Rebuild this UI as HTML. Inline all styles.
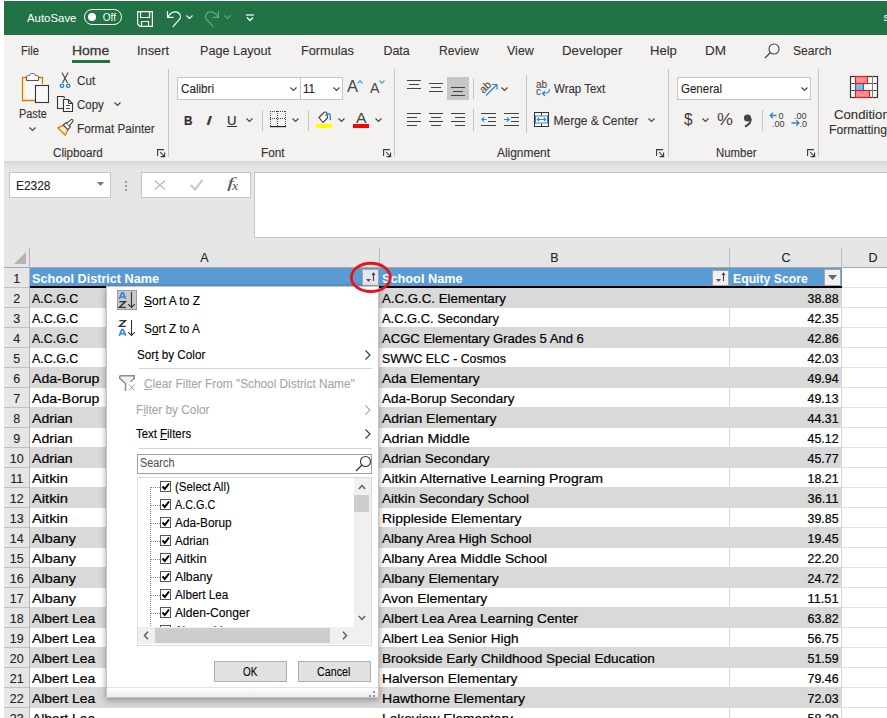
<!DOCTYPE html>
<html><head><meta charset="utf-8"><title>Excel</title>
<style>
html,body{margin:0;padding:0;}
body{width:887px;height:718px;overflow:hidden;position:relative;background:#fff;font-family:'Liberation Sans', sans-serif;}
svg{overflow:visible}
</style></head><body>
<div style="position:absolute;left:4px;top:1px;width:883px;height:34px;background:#217346;"></div>
<div style="position:absolute;left:4px;top:35px;width:883px;height:1px;background:#ffffff;"></div>
<div style="position:absolute;top:13px;font-size:11px;line-height:11px;color:#fff;white-space:nowrap;left:27.4px;transform-origin:0 0;transform:scaleX(1.036);">AutoSave</div>
<div style="position:absolute;left:84px;top:9px;width:38px;height:16px;box-sizing:border-box;border:1px solid #fff;border-radius:8px;"></div>
<div style="position:absolute;left:88px;top:13px;width:8px;height:8px;background:#fff;border-radius:50%;"></div>
<div style="position:absolute;top:13px;font-size:10px;line-height:10px;color:#fff;white-space:nowrap;left:102.8px;transform-origin:0 0;">Off</div>
<svg style="position:absolute;left:137px;top:11px;" width="17" height="16" viewBox="0 0 17 16"><path d="M0.6 0.6 H15.4 V15.4 H3 L0.6 13 Z M3.5 0.6 V6.5 H12.5 V0.6 M4.5 15.4 V10.5 H11.5 V15.4" fill="none" stroke="#fff" stroke-width="1.2"/></svg>
<svg style="position:absolute;left:166px;top:11px;" width="16" height="16" viewBox="0 0 16 16"><path d="M1.5 0 V6.4 H7.5" fill="none" stroke="#fff" stroke-width="1.2"/><path d="M2 6 C4 2.2 7 0.6 10 0.8 C13.5 1.2 15.5 4.5 13.8 8 L6.8 15.8" fill="none" stroke="#fff" stroke-width="1.2"/></svg>
<svg style="position:absolute;left:186px;top:15px;" width="7" height="4" viewBox="0 0 7 4"><path d="M0.5 0.5 L3.5 3.5 L6.5 0.5" fill="none" stroke="#fff" stroke-width="1.1"/></svg>
<svg style="position:absolute;left:204px;top:11px;" width="16" height="16" viewBox="0 0 16 16"><g opacity="0.35"><path d="M14.5 0 V6.4 H8.5" fill="none" stroke="#fff" stroke-width="1.2"/><path d="M14 6 C12 2.2 9 0.6 6 0.8 C2.5 1.2 0.5 4.5 2.2 8 L9.2 15.8" fill="none" stroke="#fff" stroke-width="1.2"/></g></svg>
<svg style="position:absolute;left:224px;top:15px;" width="7" height="4" viewBox="0 0 7 4"><path d="M0.5 0.5 L3.5 3.5 L6.5 0.5" fill="none" stroke="#fff" stroke-opacity="0.35" stroke-width="1.1"/></svg>
<svg style="position:absolute;left:246px;top:14px;" width="8" height="8" viewBox="0 0 8 8"><path d="M0 1 H8" stroke="#fff" stroke-width="1.2"/><path d="M1 3.5 L4 6.5 L7 3.5" fill="none" stroke="#fff" stroke-width="1.3"/></svg>
<div style="position:absolute;top:12px;font-size:11px;line-height:11px;color:#fff;white-space:nowrap;left:883.5px;transform-origin:0 0;">s</div>
<div style="position:absolute;left:4px;top:36px;width:883px;height:125px;background:#f3f2f1;"></div>
<div style="position:absolute;top:45px;font-size:12.5px;line-height:12.5px;color:#323130;white-space:nowrap;left:21.4px;transform-origin:0 0;-webkit-text-stroke:0.1px #323130;transform:scaleX(0.898);">File</div>
<div style="position:absolute;top:45px;font-size:12.5px;line-height:12.5px;color:#3b3a39;white-space:nowrap;left:72.2px;transform-origin:0 0;transform:scaleX(1.116);-webkit-text-stroke:0.3px #3b3a39;">Home</div>
<div style="position:absolute;top:45px;font-size:12.5px;line-height:12.5px;color:#323130;white-space:nowrap;left:137px;transform-origin:0 0;-webkit-text-stroke:0.1px #323130;transform:scaleX(1.023);">Insert</div>
<div style="position:absolute;top:45px;font-size:12.5px;line-height:12.5px;color:#323130;white-space:nowrap;left:200.1px;transform-origin:0 0;-webkit-text-stroke:0.1px #323130;transform:scaleX(1.013);">Page Layout</div>
<div style="position:absolute;top:45px;font-size:12.5px;line-height:12.5px;color:#323130;white-space:nowrap;left:301px;transform-origin:0 0;-webkit-text-stroke:0.1px #323130;transform:scaleX(1.017);">Formulas</div>
<div style="position:absolute;top:45px;font-size:12.5px;line-height:12.5px;color:#323130;white-space:nowrap;left:383.4px;transform-origin:0 0;-webkit-text-stroke:0.1px #323130;">Data</div>
<div style="position:absolute;top:45px;font-size:12.5px;line-height:12.5px;color:#323130;white-space:nowrap;left:439.2px;transform-origin:0 0;-webkit-text-stroke:0.1px #323130;transform:scaleX(0.971);">Review</div>
<div style="position:absolute;top:45px;font-size:12.5px;line-height:12.5px;color:#323130;white-space:nowrap;left:507px;transform-origin:0 0;-webkit-text-stroke:0.1px #323130;">View</div>
<div style="position:absolute;top:45px;font-size:12.5px;line-height:12.5px;color:#323130;white-space:nowrap;left:561.6px;transform-origin:0 0;-webkit-text-stroke:0.1px #323130;transform:scaleX(1.060);">Developer</div>
<div style="position:absolute;top:45px;font-size:12.5px;line-height:12.5px;color:#323130;white-space:nowrap;left:649.8px;transform-origin:0 0;-webkit-text-stroke:0.1px #323130;transform:scaleX(1.046);">Help</div>
<div style="position:absolute;top:45px;font-size:12.5px;line-height:12.5px;color:#323130;white-space:nowrap;left:704.9px;transform-origin:0 0;-webkit-text-stroke:0.1px #323130;transform:scaleX(1.080);">DM</div>
<div style="position:absolute;top:45px;font-size:12.5px;line-height:12.5px;color:#323130;white-space:nowrap;left:793px;transform-origin:0 0;-webkit-text-stroke:0.1px #323130;transform:scaleX(0.972);">Search</div>
<div style="position:absolute;left:72px;top:60px;width:38px;height:3px;background:#217346;"></div>
<svg style="position:absolute;left:764px;top:43px;" width="16" height="15" viewBox="0 0 16 15"><circle cx="10" cy="6" r="5" fill="none" stroke="#444" stroke-width="1.1"/><path d="M6.5 9.5 L1 15" stroke="#444" stroke-width="1.2"/></svg>
<div style="position:absolute;left:168px;top:69px;width:1px;height:88px;background:#c8c6c4;"></div>
<div style="position:absolute;left:394px;top:69px;width:1px;height:88px;background:#c8c6c4;"></div>
<div style="position:absolute;left:668px;top:69px;width:1px;height:88px;background:#c8c6c4;"></div>
<div style="position:absolute;left:818px;top:69px;width:1px;height:88px;background:#c8c6c4;"></div>
<svg style="position:absolute;left:157px;top:149px;" width="9" height="9" viewBox="0 0 9 9"><path d="M0.6 7 V0.6 H7" fill="none" stroke="#3b3a39" stroke-width="1.1"/><path d="M3.2 3.2 L7.6 7.6 M7.6 3.6 V7.6 H3.6" fill="none" stroke="#3b3a39" stroke-width="1.1"/></svg>
<svg style="position:absolute;left:383px;top:149px;" width="9" height="9" viewBox="0 0 9 9"><path d="M0.6 7 V0.6 H7" fill="none" stroke="#3b3a39" stroke-width="1.1"/><path d="M3.2 3.2 L7.6 7.6 M7.6 3.6 V7.6 H3.6" fill="none" stroke="#3b3a39" stroke-width="1.1"/></svg>
<svg style="position:absolute;left:656px;top:149px;" width="9" height="9" viewBox="0 0 9 9"><path d="M0.6 7 V0.6 H7" fill="none" stroke="#3b3a39" stroke-width="1.1"/><path d="M3.2 3.2 L7.6 7.6 M7.6 3.6 V7.6 H3.6" fill="none" stroke="#3b3a39" stroke-width="1.1"/></svg>
<svg style="position:absolute;left:807px;top:149px;" width="9" height="9" viewBox="0 0 9 9"><path d="M0.6 7 V0.6 H7" fill="none" stroke="#3b3a39" stroke-width="1.1"/><path d="M3.2 3.2 L7.6 7.6 M7.6 3.6 V7.6 H3.6" fill="none" stroke="#3b3a39" stroke-width="1.1"/></svg>
<div style="position:absolute;top:147px;font-size:12px;line-height:12px;color:#323130;white-space:nowrap;left:52.7px;transform-origin:0 0;-webkit-text-stroke:0.1px #323130;transform:scaleX(0.969);">Clipboard</div>
<div style="position:absolute;top:147px;font-size:12px;line-height:12px;color:#323130;white-space:nowrap;left:261.2px;transform-origin:0 0;-webkit-text-stroke:0.1px #323130;transform:scaleX(0.983);">Font</div>
<div style="position:absolute;top:147px;font-size:12px;line-height:12px;color:#323130;white-space:nowrap;left:497.2px;transform-origin:0 0;-webkit-text-stroke:0.1px #323130;transform:scaleX(0.993);">Alignment</div>
<div style="position:absolute;top:147px;font-size:12px;line-height:12px;color:#323130;white-space:nowrap;left:715.5px;transform-origin:0 0;-webkit-text-stroke:0.1px #323130;transform:scaleX(0.949);">Number</div>
<svg style="position:absolute;left:21px;top:72px;" width="29" height="32" viewBox="0 0 29 32"><path d="M5 5.5 H1.5 V28.5 H14" fill="none" stroke="#e07b00" stroke-width="1.3"/><path d="M18 5.5 H21.5 V12" fill="none" stroke="#e07b00" stroke-width="1.3"/>
<path d="M3 7 V27 H14 M3 7 H5 M18 7 H20 V12" fill="none" stroke="#fbe3a6" stroke-width="1.2"/>
<rect x="3.6" y="7.6" width="16" height="19" fill="#f9f9f9"/>
<path d="M5.5 8.5 V5 C5.5 3.5 7 3.5 8.5 3.5 C9 0.8 14 0.8 14.5 3.5 C16 3.5 17.5 3.5 17.5 5 V8.5 Z" fill="#fafafa" stroke="#555" stroke-width="1"/>
<rect x="14.5" y="13.5" width="13" height="17" fill="#f9f9f9" stroke="#333" stroke-width="1.1"/></svg>
<div style="position:absolute;top:108px;font-size:12px;line-height:12px;color:#323130;white-space:nowrap;left:19.2px;transform-origin:0 0;-webkit-text-stroke:0.1px #323130;transform:scaleX(0.906);">Paste</div>
<svg style="position:absolute;left:29px;top:127px;" width="7" height="4" viewBox="0 0 7 4"><path d="M0.5 0.5 L3.5 3.5 L6.5 0.5" fill="none" stroke="#444" stroke-width="1.1"/></svg>
<svg style="position:absolute;left:59px;top:72px;" width="12" height="16" viewBox="0 0 12 16"><path d="M3 0.5 L8.5 11 M9 0.5 L3.5 11" stroke="#444" stroke-width="1.1" fill="none"/><circle cx="3" cy="13.8" r="1.7" fill="none" stroke="#2b88d8" stroke-width="1.4"/><circle cx="9.2" cy="13.8" r="1.7" fill="none" stroke="#2b88d8" stroke-width="1.4"/></svg>
<div style="position:absolute;top:75px;font-size:12px;line-height:12px;color:#323130;white-space:nowrap;left:76.7px;transform-origin:0 0;-webkit-text-stroke:0.1px #323130;transform:scaleX(0.974);">Cut</div>
<svg style="position:absolute;left:56px;top:96px;" width="18" height="17" viewBox="0 0 18 17"><path d="M7 12.5 H1.5 V0.5 H7.5 L9 2" fill="none" stroke="#333" stroke-width="1.1"/><path d="M7.5 3.5 H12.5 L16.5 7.5 V15.5 H7.5 Z" fill="#fafafa" stroke="#333" stroke-width="1.1"/><path d="M12.5 3.5 V7.5 H16.5" fill="none" stroke="#333" stroke-width="1"/><path d="M10 9.5 H14 M10 12.5 H14" stroke="#444" stroke-width="1"/></svg>
<div style="position:absolute;top:99px;font-size:12px;line-height:12px;color:#323130;white-space:nowrap;left:76.7px;transform-origin:0 0;-webkit-text-stroke:0.1px #323130;transform:scaleX(0.957);">Copy</div>
<svg style="position:absolute;left:114px;top:102px;" width="7" height="4" viewBox="0 0 7 4"><path d="M0.5 0.5 L3.5 3.5 L6.5 0.5" fill="none" stroke="#444" stroke-width="1.1"/></svg>
<svg style="position:absolute;left:57px;top:119px;" width="17" height="17" viewBox="0 0 17 17"><path d="M0.8 8.8 L6.5 6.3 L10.8 10.6 L8.3 16.2 Z" fill="#fdf3e0" stroke="#e07b00" stroke-width="1.3" stroke-linejoin="round"/><path d="M4 11 L8 13.5 L8.3 15.5 Z" fill="#f7c66b"/><path d="M6.3 6 L9.2 3.6 L13.4 7.8 L10.9 10.7 Z" fill="#fff" stroke="#444" stroke-width="1.1"/><path d="M10 4.2 L14.2 0.6 C15 0 16.6 1.4 15.9 2.3 L12.4 6.6" fill="#fff" stroke="#444" stroke-width="1.1"/></svg>
<div style="position:absolute;top:123px;font-size:12px;line-height:12px;color:#323130;white-space:nowrap;left:76.7px;transform-origin:0 0;-webkit-text-stroke:0.1px #323130;transform:scaleX(0.978);">Format Painter</div>
<div style="position:absolute;left:177px;top:77px;width:124px;height:23px;box-sizing:border-box;background:#fff;border:1px solid #c8c6c4;"></div>
<div style="position:absolute;left:300px;top:77px;width:43px;height:23px;box-sizing:border-box;background:#fff;border:1px solid #c8c6c4;"></div>
<div style="position:absolute;top:83px;font-size:12px;line-height:12px;color:#252423;white-space:nowrap;left:180.5px;transform-origin:0 0;-webkit-text-stroke:0.1px #252423;transform:scaleX(0.970);">Calibri</div>
<div style="position:absolute;top:83px;font-size:12px;line-height:12px;color:#252423;white-space:nowrap;left:303.3px;transform-origin:0 0;-webkit-text-stroke:0.1px #252423;transform:scaleX(0.962);">11</div>
<svg style="position:absolute;left:290px;top:87px;" width="7" height="4" viewBox="0 0 7 4"><path d="M0.5 0.5 L3.5 3.5 L6.5 0.5" fill="none" stroke="#444" stroke-width="1.1"/></svg>
<svg style="position:absolute;left:333px;top:87px;" width="7" height="4" viewBox="0 0 7 4"><path d="M0.5 0.5 L3.5 3.5 L6.5 0.5" fill="none" stroke="#444" stroke-width="1.1"/></svg>
<div style="position:absolute;top:79.3px;font-size:16px;line-height:16px;color:#444;white-space:nowrap;left:347.3px;transform-origin:0 0;transform:scaleX(1.031);-webkit-text-stroke:0;">A</div>
<svg style="position:absolute;left:357px;top:80px;" width="6" height="4" viewBox="0 0 6 4"><path d="M0.5 3.5 L3 0.8 L5.5 3.5" fill="none" stroke="#2b88d8" stroke-width="1.1"/></svg>
<div style="position:absolute;top:81.3px;font-size:14px;line-height:14px;color:#444;white-space:nowrap;left:370.4px;transform-origin:0 0;transform:scaleX(1.017);-webkit-text-stroke:0;">A</div>
<svg style="position:absolute;left:379px;top:80px;" width="6" height="4" viewBox="0 0 6 4"><path d="M0.5 0.5 L3 3.2 L5.5 0.5" fill="none" stroke="#2b88d8" stroke-width="1.1"/></svg>
<div style="position:absolute;top:113.5px;font-size:13px;line-height:13px;color:#323130;white-space:nowrap;font-weight:bold;left:184px;transform-origin:0 0;-webkit-text-stroke:0.2px #323130;transform:scaleX(0.905);">B</div>
<div style="position:absolute;top:113.5px;font-size:13px;line-height:13px;color:#323130;white-space:nowrap;left:206px;transform-origin:0 0;-webkit-text-stroke:0.2px #323130;transform:scaleX(1.655);font-style:italic;">I</div>
<div style="position:absolute;top:113.5px;font-size:13px;line-height:13px;color:#323130;white-space:nowrap;left:227px;transform-origin:0 0;-webkit-text-stroke:0.2px #323130;transform:scaleX(1.012);">U</div>
<div style="position:absolute;left:227px;top:126px;width:10px;height:1px;background:#323130;"></div>
<svg style="position:absolute;left:246px;top:118px;" width="7" height="4" viewBox="0 0 7 4"><path d="M0.5 0.5 L3.5 3.5 L6.5 0.5" fill="none" stroke="#444" stroke-width="1.1"/></svg>
<div style="position:absolute;left:262px;top:110px;width:1px;height:21px;background:#c8c6c4;"></div>
<svg style="position:absolute;left:270px;top:111px;" width="16" height="17" viewBox="0 0 16 17"><rect x="0" y="0" width="1" height="1" fill="#444"/><rect x="0" y="0" width="1" height="1" fill="#444"/><rect x="15" y="0" width="1" height="1" fill="#444"/><rect x="0" y="7" width="1" height="1" fill="#444"/><rect x="7" y="0" width="1" height="1" fill="#444"/><rect x="2" y="0" width="1" height="1" fill="#444"/><rect x="0" y="2" width="1" height="1" fill="#444"/><rect x="15" y="2" width="1" height="1" fill="#444"/><rect x="2" y="7" width="1" height="1" fill="#444"/><rect x="7" y="2" width="1" height="1" fill="#444"/><rect x="4" y="0" width="1" height="1" fill="#444"/><rect x="0" y="4" width="1" height="1" fill="#444"/><rect x="15" y="4" width="1" height="1" fill="#444"/><rect x="4" y="7" width="1" height="1" fill="#444"/><rect x="7" y="4" width="1" height="1" fill="#444"/><rect x="6" y="0" width="1" height="1" fill="#444"/><rect x="0" y="6" width="1" height="1" fill="#444"/><rect x="15" y="6" width="1" height="1" fill="#444"/><rect x="6" y="7" width="1" height="1" fill="#444"/><rect x="7" y="6" width="1" height="1" fill="#444"/><rect x="8" y="0" width="1" height="1" fill="#444"/><rect x="0" y="8" width="1" height="1" fill="#444"/><rect x="15" y="8" width="1" height="1" fill="#444"/><rect x="8" y="7" width="1" height="1" fill="#444"/><rect x="7" y="8" width="1" height="1" fill="#444"/><rect x="10" y="0" width="1" height="1" fill="#444"/><rect x="0" y="10" width="1" height="1" fill="#444"/><rect x="15" y="10" width="1" height="1" fill="#444"/><rect x="10" y="7" width="1" height="1" fill="#444"/><rect x="7" y="10" width="1" height="1" fill="#444"/><rect x="12" y="0" width="1" height="1" fill="#444"/><rect x="0" y="12" width="1" height="1" fill="#444"/><rect x="15" y="12" width="1" height="1" fill="#444"/><rect x="12" y="7" width="1" height="1" fill="#444"/><rect x="7" y="12" width="1" height="1" fill="#444"/><rect x="14" y="0" width="1" height="1" fill="#444"/><rect x="0" y="14" width="1" height="1" fill="#444"/><rect x="15" y="14" width="1" height="1" fill="#444"/><rect x="14" y="7" width="1" height="1" fill="#444"/><rect x="7" y="14" width="1" height="1" fill="#444"/><rect x="0" y="15" width="16" height="1.2" fill="#222"/></svg>
<svg style="position:absolute;left:292px;top:118px;" width="7" height="4" viewBox="0 0 7 4"><path d="M0.5 0.5 L3.5 3.5 L6.5 0.5" fill="none" stroke="#444" stroke-width="1.1"/></svg>
<div style="position:absolute;left:308px;top:110px;width:1px;height:21px;background:#c8c6c4;"></div>
<svg style="position:absolute;left:316px;top:111px;" width="17" height="13" viewBox="0 0 17 13"><path d="M3 6.5 L8 1.5 C9 0.5 10.5 1 11 2.5 L11.5 7 L7 11.5 Z" fill="#fff" stroke="#444" stroke-width="1.1"/><path d="M9.5 5 C11 1.5 14 2 14.3 5.5 L14.3 9" fill="none" stroke="#2b88d8" stroke-width="1.4"/></svg>
<div style="position:absolute;left:316px;top:124px;width:16px;height:4px;background:#ffff00;"></div>
<svg style="position:absolute;left:338px;top:118px;" width="7" height="4" viewBox="0 0 7 4"><path d="M0.5 0.5 L3.5 3.5 L6.5 0.5" fill="none" stroke="#444" stroke-width="1.1"/></svg>
<div style="position:absolute;top:110.5px;font-size:14px;line-height:14px;color:#444;white-space:nowrap;left:355.5px;transform-origin:0 0;transform:scaleX(1.124);-webkit-text-stroke:0;">A</div>
<div style="position:absolute;left:353px;top:124px;width:16px;height:4px;background:#ff0000;"></div>
<svg style="position:absolute;left:375px;top:118px;" width="7" height="4" viewBox="0 0 7 4"><path d="M0.5 0.5 L3.5 3.5 L6.5 0.5" fill="none" stroke="#444" stroke-width="1.1"/></svg>
<svg style="position:absolute;left:407px;top:80px;" width="14" height="16" viewBox="0 0 14 16"><path d="M0 0.5 H14" stroke="#444" stroke-width="1"/><path d="M2 4.5 H12" stroke="#444" stroke-width="1"/><path d="M0 8.5 H14" stroke="#444" stroke-width="1"/></svg>
<svg style="position:absolute;left:429px;top:83px;" width="14" height="16" viewBox="0 0 14 16"><path d="M0 0.5 H14" stroke="#444" stroke-width="1"/><path d="M2 4.5 H12" stroke="#444" stroke-width="1"/><path d="M0 8.5 H14" stroke="#444" stroke-width="1"/></svg>
<div style="position:absolute;left:447px;top:77px;width:22px;height:23px;background:#c8c6c4;"></div>
<svg style="position:absolute;left:451px;top:84px;" width="14" height="16" viewBox="0 0 14 16"><path d="M0 3.5 H14" stroke="#444" stroke-width="1"/><path d="M2 7.5 H12" stroke="#444" stroke-width="1"/><path d="M0 11.5 H14" stroke="#444" stroke-width="1"/></svg>
<div style="position:absolute;left:473px;top:78px;width:1px;height:21px;background:#c8c6c4;"></div>
<svg style="position:absolute;left:480px;top:79px;" width="28" height="18" viewBox="0 0 28 18"><text x="0" y="0" font-size="11" fill="#3b3a39" transform="translate(3.5 15) rotate(-45)" font-family="Liberation Sans">ab</text><path d="M6 16.5 L16.5 6 M12 5.5 H17 V10.5" fill="none" stroke="#2b88d8" stroke-width="1.2"/></svg>
<svg style="position:absolute;left:501px;top:87px;" width="7" height="4" viewBox="0 0 7 4"><path d="M0.5 0.5 L3.5 3.5 L6.5 0.5" fill="none" stroke="#444" stroke-width="1.1"/></svg>
<div style="position:absolute;left:526px;top:75px;width:1px;height:58px;background:#c8c6c4;"></div>
<svg style="position:absolute;left:536px;top:80px;" width="16" height="17" viewBox="0 0 16 17"><text x="0" y="8" font-size="10" fill="#3b3a39" font-family="Liberation Sans">ab</text><text x="0" y="14.5" font-size="10" fill="#3b3a39" font-family="Liberation Sans">c</text><path d="M13.5 9 C14 12 12 13 7 13.5 M9 11 L6.5 13.5 L9 16" fill="none" stroke="#2b88d8" stroke-width="1.2"/></svg>
<div style="position:absolute;top:83px;font-size:12px;line-height:12px;color:#323130;white-space:nowrap;left:553.5px;transform-origin:0 0;-webkit-text-stroke:0.1px #323130;transform:scaleX(0.957);">Wrap Text</div>
<svg style="position:absolute;left:407px;top:113px;" width="14" height="16" viewBox="0 0 14 16"><path d="M0 0.5 H14" stroke="#444" stroke-width="1"/><path d="M0 4.5 H10" stroke="#444" stroke-width="1"/><path d="M0 8.5 H14" stroke="#444" stroke-width="1"/><path d="M0 12.5 H10" stroke="#444" stroke-width="1"/></svg>
<svg style="position:absolute;left:429px;top:113px;" width="14" height="16" viewBox="0 0 14 16"><path d="M0 0.5 H14" stroke="#444" stroke-width="1"/><path d="M2 4.5 H12" stroke="#444" stroke-width="1"/><path d="M0 8.5 H14" stroke="#444" stroke-width="1"/><path d="M2 12.5 H12" stroke="#444" stroke-width="1"/></svg>
<svg style="position:absolute;left:451px;top:113px;" width="14" height="16" viewBox="0 0 14 16"><path d="M0 0.5 H14" stroke="#444" stroke-width="1"/><path d="M4 4.5 H14" stroke="#444" stroke-width="1"/><path d="M0 8.5 H14" stroke="#444" stroke-width="1"/><path d="M4 12.5 H14" stroke="#444" stroke-width="1"/></svg>
<div style="position:absolute;left:473px;top:109px;width:1px;height:22px;background:#c8c6c4;"></div>
<svg style="position:absolute;left:481px;top:113px;" width="16" height="15" viewBox="0 0 16 15"><path d="M0 0.5 H15 M7 4.5 H15 M7 8.5 H15 M0 12.5 H15" stroke="#444"/><path d="M5.5 6.5 H0.8 M3 4.3 L0.8 6.5 L3 8.7" fill="none" stroke="#2b88d8" stroke-width="1.1"/></svg>
<svg style="position:absolute;left:504px;top:113px;" width="16" height="15" viewBox="0 0 16 15"><path d="M0 0.5 H15 M7 4.5 H15 M7 8.5 H15 M0 12.5 H15" stroke="#444"/><path d="M0 6.5 H5 M3 4.3 L5.2 6.5 L3 8.7" fill="none" stroke="#2b88d8" stroke-width="1.1"/></svg>
<svg style="position:absolute;left:534px;top:112px;" width="15" height="15" viewBox="0 0 15 15"><rect x="0.5" y="0.5" width="14" height="14" fill="#fafafa" stroke="#333" stroke-width="1"/><rect x="1.5" y="4" width="12" height="7" fill="#fff" stroke="#2b88d8" stroke-width="1"/><path d="M7.5 0.5 V3.5 M7.5 11.5 V14.5" stroke="#333" stroke-width="1"/><path d="M3.3 7.5 H11.7 M5.2 5.6 L3.3 7.5 L5.2 9.4 M9.8 5.6 L11.7 7.5 L9.8 9.4" fill="none" stroke="#2b88d8" stroke-width="1.1"/></svg>
<div style="position:absolute;top:115px;font-size:12px;line-height:12px;color:#323130;white-space:nowrap;left:553.5px;transform-origin:0 0;-webkit-text-stroke:0.1px #323130;">Merge &amp; Center</div>
<svg style="position:absolute;left:648px;top:118px;" width="7" height="4" viewBox="0 0 7 4"><path d="M0.5 0.5 L3.5 3.5 L6.5 0.5" fill="none" stroke="#444" stroke-width="1.1"/></svg>
<div style="position:absolute;left:677px;top:77px;width:134px;height:23px;box-sizing:border-box;background:#fff;border:1px solid #c8c6c4;"></div>
<div style="position:absolute;top:83px;font-size:12px;line-height:12px;color:#252423;white-space:nowrap;left:680.5px;transform-origin:0 0;-webkit-text-stroke:0.1px #252423;transform:scaleX(0.960);">General</div>
<svg style="position:absolute;left:801px;top:87px;" width="7" height="4" viewBox="0 0 7 4"><path d="M0.5 0.5 L3.5 3.5 L6.5 0.5" fill="none" stroke="#444" stroke-width="1.1"/></svg>
<div style="position:absolute;top:112px;font-size:16px;line-height:16px;color:#3b3a39;white-space:nowrap;left:683.5px;transform-origin:0 0;transform:scaleX(0.954);-webkit-text-stroke:0;font-weight:300;">$</div>
<svg style="position:absolute;left:702px;top:118px;" width="7" height="4" viewBox="0 0 7 4"><path d="M0.5 0.5 L3.5 3.5 L6.5 0.5" fill="none" stroke="#444" stroke-width="1.1"/></svg>
<div style="position:absolute;top:112px;font-size:16px;line-height:16px;color:#444;white-space:nowrap;left:716.5px;transform-origin:0 0;transform:scaleX(1.124);-webkit-text-stroke:0;">%</div>
<svg style="position:absolute;left:743px;top:114px;" width="9" height="13" viewBox="0 0 9 13"><circle cx="4.5" cy="4" r="3.6" fill="#444"/><path d="M7.8 4.5 C8 8.5 5.5 11 2 12.5" fill="none" stroke="#444" stroke-width="2"/></svg>
<div style="position:absolute;left:762px;top:110px;width:1px;height:21px;background:#c8c6c4;"></div>
<svg style="position:absolute;left:769px;top:111px;" width="18" height="17" viewBox="0 0 18 17"><path d="M1 4.5 H7.5 M4 1.8 L1.2 4.5 L4 7.2" fill="none" stroke="#2b88d8" stroke-width="1.3"/><text x="9.5" y="7.5" font-size="9" fill="#3b3a39" font-family="Liberation Sans">0</text><text x="3" y="15.5" font-size="9" fill="#3b3a39" font-family="Liberation Sans">.00</text></svg>
<svg style="position:absolute;left:791px;top:111px;" width="18" height="17" viewBox="0 0 18 17"><text x="3" y="7.5" font-size="9" fill="#3b3a39" font-family="Liberation Sans">.00</text><path d="M0.5 12 H8 M5.3 9.3 L8 12 L5.3 14.7" fill="none" stroke="#2b88d8" stroke-width="1.3"/><text x="8.5" y="15.5" font-size="9" fill="#3b3a39" font-family="Liberation Sans">.0</text></svg>
<svg style="position:absolute;left:850px;top:76px;" width="28" height="22" viewBox="0 0 28 22"><rect x="0.5" y="0.5" width="27" height="21" fill="#fafafa" stroke="#333" stroke-width="1.2"/><path d="M0 7.5 H28 M0 14.5 H28" stroke="#555" stroke-width="1"/><path d="M22.5 0 V22" stroke="#808080" stroke-width="1"/><rect x="5.5" y="7.5" width="8" height="7" fill="#7dbbee"/><path d="M5.5 7.5 V14.5 M13.5 7.5 V14.5" stroke="#1f6fc5" stroke-width="1.2"/><rect x="5.5" y="0.6" width="12" height="6.9" fill="#ff8f96" stroke="#e0201e" stroke-width="1.2"/><rect x="5.5" y="14.5" width="14" height="6.9" fill="#ff8f96" stroke="#e0201e" stroke-width="1.2"/></svg>
<div style="position:absolute;top:108.5px;font-size:12px;line-height:12px;color:#323130;white-space:nowrap;left:833.5px;transform-origin:0 0;-webkit-text-stroke:0.1px #323130;transform:scaleX(1.099);">Conditional</div>
<div style="position:absolute;top:124px;font-size:12px;line-height:12px;color:#323130;white-space:nowrap;left:829.4px;transform-origin:0 0;-webkit-text-stroke:0.1px #323130;transform:scaleX(1.011);">Formatting</div>
<div style="position:absolute;left:4px;top:161px;width:883px;height:87px;background:#e6e6e6;"></div>
<div style="position:absolute;left:4px;top:161px;width:883px;height:6px;background:linear-gradient(#d6d6d6,#e6e6e6);"></div>
<div style="position:absolute;left:9px;top:172px;width:102px;height:26px;box-sizing:border-box;background:#fff;border:1px solid #c6c6c6;"></div>
<div style="position:absolute;top:180px;font-size:12px;line-height:12px;color:#222;white-space:nowrap;left:16px;transform-origin:0 0;-webkit-text-stroke:0.1px #222;transform:scaleX(0.994);">E2328</div>
<svg style="position:absolute;left:97px;top:182px;" width="7" height="4" viewBox="0 0 7 4"><path d="M0 0 H7 L3.5 4 Z" fill="#777"/></svg>
<div style="position:absolute;left:125px;top:181px;width:2px;height:2px;background:#a0a0a0;"></div>
<div style="position:absolute;left:125px;top:185px;width:2px;height:2px;background:#a0a0a0;"></div>
<div style="position:absolute;left:125px;top:189px;width:2px;height:2px;background:#a0a0a0;"></div>
<div style="position:absolute;left:141px;top:172px;width:110px;height:26px;box-sizing:border-box;background:#fff;border:1px solid #c6c6c6;"></div>
<svg style="position:absolute;left:154px;top:180px;" width="12" height="10" viewBox="0 0 12 10"><path d="M0.8 0.6 L11 9.6 M11 0.6 L0.8 9.6" stroke="#c4c4c4" stroke-width="1.5"/></svg>
<svg style="position:absolute;left:190px;top:179px;" width="13" height="12" viewBox="0 0 13 12"><path d="M0.8 6 L5 10.5 L12.5 1" fill="none" stroke="#cacaca" stroke-width="2.2"/></svg>
<div style="position:absolute;top:177px;font-size:14px;line-height:14px;color:#555;white-space:nowrap;left:226.5px;transform-origin:0 0;transform:scaleX(1.799);font-family:Liberation Serif;font-style:italic;-webkit-text-stroke:0;">f</div>
<div style="position:absolute;top:179.5px;font-size:12px;line-height:12px;color:#555;white-space:nowrap;left:231.5px;transform-origin:0 0;transform:scaleX(1.167);font-family:Liberation Serif;font-style:italic;-webkit-text-stroke:0;">x</div>
<div style="position:absolute;left:254px;top:172px;width:640px;height:66px;box-sizing:border-box;background:#fff;border:1px solid #c6c6c6;"></div>
<div style="position:absolute;left:4px;top:248px;width:883px;height:470px;background:#fff;"></div>
<div style="position:absolute;left:4px;top:248px;width:883px;height:19px;background:#e6e6e6;"></div>
<div style="position:absolute;left:4px;top:267px;width:25px;height:451px;background:#e6e6e6;"></div>
<div style="position:absolute;left:4px;top:267px;width:883px;height:1px;background:#a8a8a8;"></div>
<div style="position:absolute;left:29px;top:248px;width:1px;height:19px;background:#bdbdbd;"></div>
<div style="position:absolute;left:379px;top:248px;width:1px;height:19px;background:#bdbdbd;"></div>
<div style="position:absolute;left:729px;top:248px;width:1px;height:19px;background:#bdbdbd;"></div>
<div style="position:absolute;left:841px;top:248px;width:1px;height:19px;background:#bdbdbd;"></div>
<div style="position:absolute;left:29px;top:248px;width:1px;height:470px;background:#b4b4b4;"></div>
<svg style="position:absolute;left:14px;top:252px;" width="12" height="12" viewBox="0 0 12 12"><path d="M12 0 V12 H0 Z" fill="#b4b4b4"/></svg>
<div style="position:absolute;top:252px;font-size:12.5px;line-height:12.5px;color:#222;white-space:nowrap;left:200.33px;transform-origin:0 0;-webkit-text-stroke:0.1px #222;">A</div>
<div style="position:absolute;top:252px;font-size:12.5px;line-height:12.5px;color:#222;white-space:nowrap;left:550.33px;transform-origin:0 0;-webkit-text-stroke:0.1px #222;">B</div>
<div style="position:absolute;top:252px;font-size:12.5px;line-height:12.5px;color:#222;white-space:nowrap;left:781.48px;transform-origin:0 0;-webkit-text-stroke:0.1px #222;">C</div>
<div style="position:absolute;top:252px;font-size:12.5px;line-height:12.5px;color:#222;white-space:nowrap;left:868.48px;transform-origin:0 0;-webkit-text-stroke:0.1px #222;">D</div>
<div style="position:absolute;left:4px;top:287px;width:25px;height:1px;background:#c0c0c0;"></div>
<div style="position:absolute;top:273px;font-size:12.5px;line-height:12.5px;color:#222;white-space:nowrap;left:13.22px;transform-origin:0 0;-webkit-text-stroke:0.1px #222;">1</div>
<div style="position:absolute;left:4px;top:307px;width:25px;height:1px;background:#c0c0c0;"></div>
<div style="position:absolute;top:293px;font-size:12.5px;line-height:12.5px;color:#222;white-space:nowrap;left:13.22px;transform-origin:0 0;-webkit-text-stroke:0.1px #222;">2</div>
<div style="position:absolute;left:4px;top:327px;width:25px;height:1px;background:#c0c0c0;"></div>
<div style="position:absolute;top:313px;font-size:12.5px;line-height:12.5px;color:#222;white-space:nowrap;left:13.22px;transform-origin:0 0;-webkit-text-stroke:0.1px #222;">3</div>
<div style="position:absolute;left:4px;top:347px;width:25px;height:1px;background:#c0c0c0;"></div>
<div style="position:absolute;top:333px;font-size:12.5px;line-height:12.5px;color:#222;white-space:nowrap;left:13.22px;transform-origin:0 0;-webkit-text-stroke:0.1px #222;">4</div>
<div style="position:absolute;left:4px;top:367px;width:25px;height:1px;background:#c0c0c0;"></div>
<div style="position:absolute;top:353px;font-size:12.5px;line-height:12.5px;color:#222;white-space:nowrap;left:13.22px;transform-origin:0 0;-webkit-text-stroke:0.1px #222;">5</div>
<div style="position:absolute;left:4px;top:387px;width:25px;height:1px;background:#c0c0c0;"></div>
<div style="position:absolute;top:373px;font-size:12.5px;line-height:12.5px;color:#222;white-space:nowrap;left:13.22px;transform-origin:0 0;-webkit-text-stroke:0.1px #222;">6</div>
<div style="position:absolute;left:4px;top:407px;width:25px;height:1px;background:#c0c0c0;"></div>
<div style="position:absolute;top:393px;font-size:12.5px;line-height:12.5px;color:#222;white-space:nowrap;left:13.22px;transform-origin:0 0;-webkit-text-stroke:0.1px #222;">7</div>
<div style="position:absolute;left:4px;top:427px;width:25px;height:1px;background:#c0c0c0;"></div>
<div style="position:absolute;top:413px;font-size:12.5px;line-height:12.5px;color:#222;white-space:nowrap;left:13.22px;transform-origin:0 0;-webkit-text-stroke:0.1px #222;">8</div>
<div style="position:absolute;left:4px;top:447px;width:25px;height:1px;background:#c0c0c0;"></div>
<div style="position:absolute;top:433px;font-size:12.5px;line-height:12.5px;color:#222;white-space:nowrap;left:13.22px;transform-origin:0 0;-webkit-text-stroke:0.1px #222;">9</div>
<div style="position:absolute;left:4px;top:467px;width:25px;height:1px;background:#c0c0c0;"></div>
<div style="position:absolute;top:453px;font-size:12.5px;line-height:12.5px;color:#222;white-space:nowrap;left:9.75px;transform-origin:0 0;-webkit-text-stroke:0.1px #222;">10</div>
<div style="position:absolute;left:4px;top:487px;width:25px;height:1px;background:#c0c0c0;"></div>
<div style="position:absolute;top:473px;font-size:12.5px;line-height:12.5px;color:#222;white-space:nowrap;left:10.21px;transform-origin:0 0;-webkit-text-stroke:0.1px #222;">11</div>
<div style="position:absolute;left:4px;top:507px;width:25px;height:1px;background:#c0c0c0;"></div>
<div style="position:absolute;top:493px;font-size:12.5px;line-height:12.5px;color:#222;white-space:nowrap;left:9.75px;transform-origin:0 0;-webkit-text-stroke:0.1px #222;">12</div>
<div style="position:absolute;left:4px;top:527px;width:25px;height:1px;background:#c0c0c0;"></div>
<div style="position:absolute;top:513px;font-size:12.5px;line-height:12.5px;color:#222;white-space:nowrap;left:9.75px;transform-origin:0 0;-webkit-text-stroke:0.1px #222;">13</div>
<div style="position:absolute;left:4px;top:547px;width:25px;height:1px;background:#c0c0c0;"></div>
<div style="position:absolute;top:533px;font-size:12.5px;line-height:12.5px;color:#222;white-space:nowrap;left:9.75px;transform-origin:0 0;-webkit-text-stroke:0.1px #222;">14</div>
<div style="position:absolute;left:4px;top:567px;width:25px;height:1px;background:#c0c0c0;"></div>
<div style="position:absolute;top:553px;font-size:12.5px;line-height:12.5px;color:#222;white-space:nowrap;left:9.75px;transform-origin:0 0;-webkit-text-stroke:0.1px #222;">15</div>
<div style="position:absolute;left:4px;top:587px;width:25px;height:1px;background:#c0c0c0;"></div>
<div style="position:absolute;top:573px;font-size:12.5px;line-height:12.5px;color:#222;white-space:nowrap;left:9.75px;transform-origin:0 0;-webkit-text-stroke:0.1px #222;">16</div>
<div style="position:absolute;left:4px;top:607px;width:25px;height:1px;background:#c0c0c0;"></div>
<div style="position:absolute;top:593px;font-size:12.5px;line-height:12.5px;color:#222;white-space:nowrap;left:9.75px;transform-origin:0 0;-webkit-text-stroke:0.1px #222;">17</div>
<div style="position:absolute;left:4px;top:627px;width:25px;height:1px;background:#c0c0c0;"></div>
<div style="position:absolute;top:613px;font-size:12.5px;line-height:12.5px;color:#222;white-space:nowrap;left:9.75px;transform-origin:0 0;-webkit-text-stroke:0.1px #222;">18</div>
<div style="position:absolute;left:4px;top:647px;width:25px;height:1px;background:#c0c0c0;"></div>
<div style="position:absolute;top:633px;font-size:12.5px;line-height:12.5px;color:#222;white-space:nowrap;left:9.75px;transform-origin:0 0;-webkit-text-stroke:0.1px #222;">19</div>
<div style="position:absolute;left:4px;top:667px;width:25px;height:1px;background:#c0c0c0;"></div>
<div style="position:absolute;top:653px;font-size:12.5px;line-height:12.5px;color:#222;white-space:nowrap;left:9.75px;transform-origin:0 0;-webkit-text-stroke:0.1px #222;">20</div>
<div style="position:absolute;left:4px;top:687px;width:25px;height:1px;background:#c0c0c0;"></div>
<div style="position:absolute;top:673px;font-size:12.5px;line-height:12.5px;color:#222;white-space:nowrap;left:9.75px;transform-origin:0 0;-webkit-text-stroke:0.1px #222;">21</div>
<div style="position:absolute;left:4px;top:707px;width:25px;height:1px;background:#c0c0c0;"></div>
<div style="position:absolute;top:693px;font-size:12.5px;line-height:12.5px;color:#222;white-space:nowrap;left:9.75px;transform-origin:0 0;-webkit-text-stroke:0.1px #222;">22</div>
<div style="position:absolute;left:4px;top:727px;width:25px;height:1px;background:#c0c0c0;"></div>
<div style="position:absolute;top:713px;font-size:12.5px;line-height:12.5px;color:#222;white-space:nowrap;left:9.75px;transform-origin:0 0;-webkit-text-stroke:0.1px #222;">23</div>
<div style="position:absolute;left:841px;top:267px;width:1px;height:451px;background:#d4d4d4;"></div>
<div style="position:absolute;left:30px;top:268px;width:812px;height:18px;background:#5b9bd5;"></div>
<div style="position:absolute;left:30px;top:286px;width:812px;height:2px;background:#000;"></div>
<div style="position:absolute;left:30px;top:288px;width:812px;height:20px;background:#d9d9d9;"></div>
<div style="position:absolute;left:729px;top:308px;width:1px;height:20px;background:#d4d4d4;"></div>
<div style="position:absolute;left:30px;top:327px;width:812px;height:21px;background:#d9d9d9;"></div>
<div style="position:absolute;left:729px;top:348px;width:1px;height:20px;background:#d4d4d4;"></div>
<div style="position:absolute;left:30px;top:367px;width:812px;height:21px;background:#d9d9d9;"></div>
<div style="position:absolute;left:729px;top:388px;width:1px;height:20px;background:#d4d4d4;"></div>
<div style="position:absolute;left:30px;top:407px;width:812px;height:21px;background:#d9d9d9;"></div>
<div style="position:absolute;left:729px;top:428px;width:1px;height:20px;background:#d4d4d4;"></div>
<div style="position:absolute;left:30px;top:447px;width:812px;height:21px;background:#d9d9d9;"></div>
<div style="position:absolute;left:729px;top:468px;width:1px;height:20px;background:#d4d4d4;"></div>
<div style="position:absolute;left:30px;top:487px;width:812px;height:21px;background:#d9d9d9;"></div>
<div style="position:absolute;left:729px;top:508px;width:1px;height:20px;background:#d4d4d4;"></div>
<div style="position:absolute;left:30px;top:527px;width:812px;height:21px;background:#d9d9d9;"></div>
<div style="position:absolute;left:729px;top:548px;width:1px;height:20px;background:#d4d4d4;"></div>
<div style="position:absolute;left:30px;top:567px;width:812px;height:21px;background:#d9d9d9;"></div>
<div style="position:absolute;left:729px;top:588px;width:1px;height:20px;background:#d4d4d4;"></div>
<div style="position:absolute;left:30px;top:607px;width:812px;height:21px;background:#d9d9d9;"></div>
<div style="position:absolute;left:729px;top:628px;width:1px;height:20px;background:#d4d4d4;"></div>
<div style="position:absolute;left:30px;top:647px;width:812px;height:21px;background:#d9d9d9;"></div>
<div style="position:absolute;left:729px;top:668px;width:1px;height:20px;background:#d4d4d4;"></div>
<div style="position:absolute;left:30px;top:687px;width:812px;height:21px;background:#d9d9d9;"></div>
<div style="position:absolute;left:729px;top:708px;width:1px;height:20px;background:#d4d4d4;"></div>
<div style="position:absolute;left:842px;top:287px;width:45px;height:1px;background:#e1e1e1;"></div>
<div style="position:absolute;left:842px;top:307px;width:45px;height:1px;background:#e1e1e1;"></div>
<div style="position:absolute;left:842px;top:327px;width:45px;height:1px;background:#e1e1e1;"></div>
<div style="position:absolute;left:842px;top:347px;width:45px;height:1px;background:#e1e1e1;"></div>
<div style="position:absolute;left:842px;top:367px;width:45px;height:1px;background:#e1e1e1;"></div>
<div style="position:absolute;left:842px;top:387px;width:45px;height:1px;background:#e1e1e1;"></div>
<div style="position:absolute;left:842px;top:407px;width:45px;height:1px;background:#e1e1e1;"></div>
<div style="position:absolute;left:842px;top:427px;width:45px;height:1px;background:#e1e1e1;"></div>
<div style="position:absolute;left:842px;top:447px;width:45px;height:1px;background:#e1e1e1;"></div>
<div style="position:absolute;left:842px;top:467px;width:45px;height:1px;background:#e1e1e1;"></div>
<div style="position:absolute;left:842px;top:487px;width:45px;height:1px;background:#e1e1e1;"></div>
<div style="position:absolute;left:842px;top:507px;width:45px;height:1px;background:#e1e1e1;"></div>
<div style="position:absolute;left:842px;top:527px;width:45px;height:1px;background:#e1e1e1;"></div>
<div style="position:absolute;left:842px;top:547px;width:45px;height:1px;background:#e1e1e1;"></div>
<div style="position:absolute;left:842px;top:567px;width:45px;height:1px;background:#e1e1e1;"></div>
<div style="position:absolute;left:842px;top:587px;width:45px;height:1px;background:#e1e1e1;"></div>
<div style="position:absolute;left:842px;top:607px;width:45px;height:1px;background:#e1e1e1;"></div>
<div style="position:absolute;left:842px;top:627px;width:45px;height:1px;background:#e1e1e1;"></div>
<div style="position:absolute;left:842px;top:647px;width:45px;height:1px;background:#e1e1e1;"></div>
<div style="position:absolute;left:842px;top:667px;width:45px;height:1px;background:#e1e1e1;"></div>
<div style="position:absolute;left:842px;top:687px;width:45px;height:1px;background:#e1e1e1;"></div>
<div style="position:absolute;left:842px;top:707px;width:45px;height:1px;background:#e1e1e1;"></div>
<div style="position:absolute;left:842px;top:727px;width:45px;height:1px;background:#e1e1e1;"></div>
<div style="position:absolute;top:272px;font-size:13px;line-height:13px;color:#fff;white-space:nowrap;font-weight:bold;left:32.3px;transform-origin:0 0;transform:scaleX(0.971);">School District Name</div>
<div style="position:absolute;top:272px;font-size:13px;line-height:13px;color:#fff;white-space:nowrap;font-weight:bold;left:382.3px;transform-origin:0 0;transform:scaleX(0.979);">School Name</div>
<div style="position:absolute;top:272px;font-size:13px;line-height:13px;color:#fff;white-space:nowrap;font-weight:bold;left:732.5px;transform-origin:0 0;transform:scaleX(0.941);">Equity Score</div>
<div style="position:absolute;top:292px;font-size:13px;line-height:13px;color:#000;white-space:nowrap;left:31.5px;transform-origin:0 0;-webkit-text-stroke:0.2px #000;transform:scaleX(0.956);">A.C.G.C</div>
<div style="position:absolute;top:292px;font-size:13px;line-height:13px;color:#000;white-space:nowrap;left:382px;transform-origin:0 0;-webkit-text-stroke:0.2px #000;transform:scaleX(1.020);">A.C.G.C. Elementary</div>
<div style="position:absolute;top:292px;font-size:13px;line-height:13px;color:#000;white-space:nowrap;right:48.5px;transform-origin:100% 0;-webkit-text-stroke:0.2px #000;transform:scaleX(0.952);">38.88</div>
<div style="position:absolute;top:312px;font-size:13px;line-height:13px;color:#000;white-space:nowrap;left:31.5px;transform-origin:0 0;-webkit-text-stroke:0.2px #000;transform:scaleX(0.956);">A.C.G.C</div>
<div style="position:absolute;top:312px;font-size:13px;line-height:13px;color:#000;white-space:nowrap;left:382px;transform-origin:0 0;-webkit-text-stroke:0.2px #000;transform:scaleX(0.992);">A.C.G.C. Secondary</div>
<div style="position:absolute;top:312px;font-size:13px;line-height:13px;color:#000;white-space:nowrap;right:48.5px;transform-origin:100% 0;-webkit-text-stroke:0.2px #000;transform:scaleX(0.952);">42.35</div>
<div style="position:absolute;top:332px;font-size:13px;line-height:13px;color:#000;white-space:nowrap;left:31.5px;transform-origin:0 0;-webkit-text-stroke:0.2px #000;transform:scaleX(0.956);">A.C.G.C</div>
<div style="position:absolute;top:332px;font-size:13px;line-height:13px;color:#000;white-space:nowrap;left:382px;transform-origin:0 0;-webkit-text-stroke:0.2px #000;transform:scaleX(1.005);">ACGC Elementary Grades 5 And 6</div>
<div style="position:absolute;top:332px;font-size:13px;line-height:13px;color:#000;white-space:nowrap;right:48.5px;transform-origin:100% 0;-webkit-text-stroke:0.2px #000;transform:scaleX(0.952);">42.86</div>
<div style="position:absolute;top:352px;font-size:13px;line-height:13px;color:#000;white-space:nowrap;left:31.5px;transform-origin:0 0;-webkit-text-stroke:0.2px #000;transform:scaleX(0.956);">A.C.G.C</div>
<div style="position:absolute;top:352px;font-size:13px;line-height:13px;color:#000;white-space:nowrap;left:382px;transform-origin:0 0;-webkit-text-stroke:0.2px #000;transform:scaleX(0.947);">SWWC ELC - Cosmos</div>
<div style="position:absolute;top:352px;font-size:13px;line-height:13px;color:#000;white-space:nowrap;right:48.5px;transform-origin:100% 0;-webkit-text-stroke:0.2px #000;transform:scaleX(0.952);">42.03</div>
<div style="position:absolute;top:372px;font-size:13px;line-height:13px;color:#000;white-space:nowrap;left:31.5px;transform-origin:0 0;-webkit-text-stroke:0.2px #000;transform:scaleX(1.083);">Ada-Borup</div>
<div style="position:absolute;top:372px;font-size:13px;line-height:13px;color:#000;white-space:nowrap;left:382px;transform-origin:0 0;-webkit-text-stroke:0.2px #000;transform:scaleX(1.055);">Ada Elementary</div>
<div style="position:absolute;top:372px;font-size:13px;line-height:13px;color:#000;white-space:nowrap;right:48.5px;transform-origin:100% 0;-webkit-text-stroke:0.2px #000;transform:scaleX(0.952);">49.94</div>
<div style="position:absolute;top:392px;font-size:13px;line-height:13px;color:#000;white-space:nowrap;left:31.5px;transform-origin:0 0;-webkit-text-stroke:0.2px #000;transform:scaleX(1.083);">Ada-Borup</div>
<div style="position:absolute;top:392px;font-size:13px;line-height:13px;color:#000;white-space:nowrap;left:382px;transform-origin:0 0;-webkit-text-stroke:0.2px #000;transform:scaleX(1.036);">Ada-Borup Secondary</div>
<div style="position:absolute;top:392px;font-size:13px;line-height:13px;color:#000;white-space:nowrap;right:48.5px;transform-origin:100% 0;-webkit-text-stroke:0.2px #000;transform:scaleX(0.952);">49.13</div>
<div style="position:absolute;top:412px;font-size:13px;line-height:13px;color:#000;white-space:nowrap;left:31.5px;transform-origin:0 0;-webkit-text-stroke:0.2px #000;transform:scaleX(1.083);">Adrian</div>
<div style="position:absolute;top:412px;font-size:13px;line-height:13px;color:#000;white-space:nowrap;left:382px;transform-origin:0 0;-webkit-text-stroke:0.2px #000;transform:scaleX(1.071);">Adrian Elementary</div>
<div style="position:absolute;top:412px;font-size:13px;line-height:13px;color:#000;white-space:nowrap;right:48.5px;transform-origin:100% 0;-webkit-text-stroke:0.2px #000;transform:scaleX(0.952);">44.31</div>
<div style="position:absolute;top:432px;font-size:13px;line-height:13px;color:#000;white-space:nowrap;left:31.5px;transform-origin:0 0;-webkit-text-stroke:0.2px #000;transform:scaleX(1.083);">Adrian</div>
<div style="position:absolute;top:432px;font-size:13px;line-height:13px;color:#000;white-space:nowrap;left:382px;transform-origin:0 0;-webkit-text-stroke:0.2px #000;transform:scaleX(1.103);">Adrian Middle</div>
<div style="position:absolute;top:432px;font-size:13px;line-height:13px;color:#000;white-space:nowrap;right:48.5px;transform-origin:100% 0;-webkit-text-stroke:0.2px #000;transform:scaleX(0.952);">45.12</div>
<div style="position:absolute;top:452px;font-size:13px;line-height:13px;color:#000;white-space:nowrap;left:31.5px;transform-origin:0 0;-webkit-text-stroke:0.2px #000;transform:scaleX(1.083);">Adrian</div>
<div style="position:absolute;top:452px;font-size:13px;line-height:13px;color:#000;white-space:nowrap;left:382px;transform-origin:0 0;-webkit-text-stroke:0.2px #000;transform:scaleX(1.040);">Adrian Secondary</div>
<div style="position:absolute;top:452px;font-size:13px;line-height:13px;color:#000;white-space:nowrap;right:48.5px;transform-origin:100% 0;-webkit-text-stroke:0.2px #000;transform:scaleX(0.952);">45.77</div>
<div style="position:absolute;top:472px;font-size:13px;line-height:13px;color:#000;white-space:nowrap;left:31.5px;transform-origin:0 0;-webkit-text-stroke:0.2px #000;transform:scaleX(1.132);">Aitkin</div>
<div style="position:absolute;top:472px;font-size:13px;line-height:13px;color:#000;white-space:nowrap;left:382px;transform-origin:0 0;-webkit-text-stroke:0.2px #000;transform:scaleX(1.085);">Aitkin Alternative Learning Program</div>
<div style="position:absolute;top:472px;font-size:13px;line-height:13px;color:#000;white-space:nowrap;right:48.5px;transform-origin:100% 0;-webkit-text-stroke:0.2px #000;transform:scaleX(0.952);">18.21</div>
<div style="position:absolute;top:492px;font-size:13px;line-height:13px;color:#000;white-space:nowrap;left:31.5px;transform-origin:0 0;-webkit-text-stroke:0.2px #000;transform:scaleX(1.132);">Aitkin</div>
<div style="position:absolute;top:492px;font-size:13px;line-height:13px;color:#000;white-space:nowrap;left:382px;transform-origin:0 0;-webkit-text-stroke:0.2px #000;transform:scaleX(1.044);">Aitkin Secondary School</div>
<div style="position:absolute;top:492px;font-size:13px;line-height:13px;color:#000;white-space:nowrap;right:48.5px;transform-origin:100% 0;-webkit-text-stroke:0.2px #000;transform:scaleX(0.982);">36.11</div>
<div style="position:absolute;top:512px;font-size:13px;line-height:13px;color:#000;white-space:nowrap;left:31.5px;transform-origin:0 0;-webkit-text-stroke:0.2px #000;transform:scaleX(1.132);">Aitkin</div>
<div style="position:absolute;top:512px;font-size:13px;line-height:13px;color:#000;white-space:nowrap;left:382px;transform-origin:0 0;-webkit-text-stroke:0.2px #000;transform:scaleX(1.072);">Rippleside Elementary</div>
<div style="position:absolute;top:512px;font-size:13px;line-height:13px;color:#000;white-space:nowrap;right:48.5px;transform-origin:100% 0;-webkit-text-stroke:0.2px #000;transform:scaleX(0.952);">39.85</div>
<div style="position:absolute;top:532px;font-size:13px;line-height:13px;color:#000;white-space:nowrap;left:31.5px;transform-origin:0 0;-webkit-text-stroke:0.2px #000;transform:scaleX(1.102);">Albany</div>
<div style="position:absolute;top:532px;font-size:13px;line-height:13px;color:#000;white-space:nowrap;left:382px;transform-origin:0 0;-webkit-text-stroke:0.2px #000;transform:scaleX(1.040);">Albany Area High School</div>
<div style="position:absolute;top:532px;font-size:13px;line-height:13px;color:#000;white-space:nowrap;right:48.5px;transform-origin:100% 0;-webkit-text-stroke:0.2px #000;transform:scaleX(0.952);">19.45</div>
<div style="position:absolute;top:552px;font-size:13px;line-height:13px;color:#000;white-space:nowrap;left:31.5px;transform-origin:0 0;-webkit-text-stroke:0.2px #000;transform:scaleX(1.102);">Albany</div>
<div style="position:absolute;top:552px;font-size:13px;line-height:13px;color:#000;white-space:nowrap;left:382px;transform-origin:0 0;-webkit-text-stroke:0.2px #000;transform:scaleX(1.063);">Albany Area Middle School</div>
<div style="position:absolute;top:552px;font-size:13px;line-height:13px;color:#000;white-space:nowrap;right:48.5px;transform-origin:100% 0;-webkit-text-stroke:0.2px #000;transform:scaleX(0.952);">22.20</div>
<div style="position:absolute;top:572px;font-size:13px;line-height:13px;color:#000;white-space:nowrap;left:31.5px;transform-origin:0 0;-webkit-text-stroke:0.2px #000;transform:scaleX(1.102);">Albany</div>
<div style="position:absolute;top:572px;font-size:13px;line-height:13px;color:#000;white-space:nowrap;left:382px;transform-origin:0 0;-webkit-text-stroke:0.2px #000;transform:scaleX(1.070);">Albany Elementary</div>
<div style="position:absolute;top:572px;font-size:13px;line-height:13px;color:#000;white-space:nowrap;right:48.5px;transform-origin:100% 0;-webkit-text-stroke:0.2px #000;transform:scaleX(0.952);">24.72</div>
<div style="position:absolute;top:592px;font-size:13px;line-height:13px;color:#000;white-space:nowrap;left:31.5px;transform-origin:0 0;-webkit-text-stroke:0.2px #000;transform:scaleX(1.102);">Albany</div>
<div style="position:absolute;top:592px;font-size:13px;line-height:13px;color:#000;white-space:nowrap;left:382px;transform-origin:0 0;-webkit-text-stroke:0.2px #000;transform:scaleX(1.065);">Avon Elementary</div>
<div style="position:absolute;top:592px;font-size:13px;line-height:13px;color:#000;white-space:nowrap;right:48.5px;transform-origin:100% 0;-webkit-text-stroke:0.2px #000;transform:scaleX(0.982);">11.51</div>
<div style="position:absolute;top:612px;font-size:13px;line-height:13px;color:#000;white-space:nowrap;left:31.5px;transform-origin:0 0;-webkit-text-stroke:0.2px #000;transform:scaleX(1.066);">Albert Lea</div>
<div style="position:absolute;top:612px;font-size:13px;line-height:13px;color:#000;white-space:nowrap;left:382px;transform-origin:0 0;-webkit-text-stroke:0.2px #000;transform:scaleX(1.052);">Albert Lea Area Learning Center</div>
<div style="position:absolute;top:612px;font-size:13px;line-height:13px;color:#000;white-space:nowrap;right:48.5px;transform-origin:100% 0;-webkit-text-stroke:0.2px #000;transform:scaleX(0.952);">63.82</div>
<div style="position:absolute;top:632px;font-size:13px;line-height:13px;color:#000;white-space:nowrap;left:31.5px;transform-origin:0 0;-webkit-text-stroke:0.2px #000;transform:scaleX(1.066);">Albert Lea</div>
<div style="position:absolute;top:632px;font-size:13px;line-height:13px;color:#000;white-space:nowrap;left:382px;transform-origin:0 0;-webkit-text-stroke:0.2px #000;transform:scaleX(1.044);">Albert Lea Senior High</div>
<div style="position:absolute;top:632px;font-size:13px;line-height:13px;color:#000;white-space:nowrap;right:48.5px;transform-origin:100% 0;-webkit-text-stroke:0.2px #000;transform:scaleX(0.952);">56.75</div>
<div style="position:absolute;top:652px;font-size:13px;line-height:13px;color:#000;white-space:nowrap;left:31.5px;transform-origin:0 0;-webkit-text-stroke:0.2px #000;transform:scaleX(1.066);">Albert Lea</div>
<div style="position:absolute;top:652px;font-size:13px;line-height:13px;color:#000;white-space:nowrap;left:382px;transform-origin:0 0;-webkit-text-stroke:0.2px #000;transform:scaleX(1.046);">Brookside Early Childhood Special Education</div>
<div style="position:absolute;top:652px;font-size:13px;line-height:13px;color:#000;white-space:nowrap;right:48.5px;transform-origin:100% 0;-webkit-text-stroke:0.2px #000;transform:scaleX(0.952);">51.59</div>
<div style="position:absolute;top:672px;font-size:13px;line-height:13px;color:#000;white-space:nowrap;left:31.5px;transform-origin:0 0;-webkit-text-stroke:0.2px #000;transform:scaleX(1.066);">Albert Lea</div>
<div style="position:absolute;top:672px;font-size:13px;line-height:13px;color:#000;white-space:nowrap;left:382px;transform-origin:0 0;-webkit-text-stroke:0.2px #000;transform:scaleX(1.059);">Halverson Elementary</div>
<div style="position:absolute;top:672px;font-size:13px;line-height:13px;color:#000;white-space:nowrap;right:48.5px;transform-origin:100% 0;-webkit-text-stroke:0.2px #000;transform:scaleX(0.952);">79.46</div>
<div style="position:absolute;top:692px;font-size:13px;line-height:13px;color:#000;white-space:nowrap;left:31.5px;transform-origin:0 0;-webkit-text-stroke:0.2px #000;transform:scaleX(1.066);">Albert Lea</div>
<div style="position:absolute;top:692px;font-size:13px;line-height:13px;color:#000;white-space:nowrap;left:382px;transform-origin:0 0;-webkit-text-stroke:0.2px #000;transform:scaleX(1.081);">Hawthorne Elementary</div>
<div style="position:absolute;top:692px;font-size:13px;line-height:13px;color:#000;white-space:nowrap;right:48.5px;transform-origin:100% 0;-webkit-text-stroke:0.2px #000;transform:scaleX(0.952);">72.03</div>
<div style="position:absolute;top:712px;font-size:13px;line-height:13px;color:#000;white-space:nowrap;left:31.5px;transform-origin:0 0;-webkit-text-stroke:0.2px #000;transform:scaleX(1.066);">Albert Lea</div>
<div style="position:absolute;top:712px;font-size:13px;line-height:13px;color:#000;white-space:nowrap;left:382px;transform-origin:0 0;-webkit-text-stroke:0.2px #000;transform:scaleX(1.059);">Lakeview Elementary</div>
<div style="position:absolute;top:712px;font-size:13px;line-height:13px;color:#000;white-space:nowrap;right:48.5px;transform-origin:100% 0;-webkit-text-stroke:0.2px #000;transform:scaleX(0.952);">58.29</div>
<div style="position:absolute;left:362px;top:269px;width:17px;height:17px;box-sizing:border-box;background:#e3e8ef;border:1px solid #a6a6a6;"></div>
<svg style="position:absolute;left:365px;top:272px;" width="12" height="11" viewBox="0 0 12 11"><path d="M1 7 H6 L3.5 10 Z" fill="#555"/><path d="M8.5 1.5 V9 M7 3 L8.5 1.2 L10 3" fill="none" stroke="#444" stroke-width="1.1"/></svg>
<div style="position:absolute;left:712px;top:270px;width:17px;height:16px;box-sizing:border-box;background:#f0f0f0;border:1px solid #a6a6a6;"></div>
<svg style="position:absolute;left:715px;top:272px;" width="12" height="11" viewBox="0 0 12 11"><path d="M1 7 H6 L3.5 10 Z" fill="#555"/><path d="M8.5 1.5 V9 M7 3 L8.5 1.2 L10 3" fill="none" stroke="#444" stroke-width="1.1"/></svg>
<div style="position:absolute;left:824px;top:269px;width:17px;height:17px;box-sizing:border-box;background:#f0f0f0;border:1px solid #a6a6a6;"></div>
<svg style="position:absolute;left:828px;top:275px;" width="9" height="5" viewBox="0 0 9 5"><path d="M0 0 H9 L4.5 5 Z" fill="#666"/></svg>
<div style="position:absolute;left:106px;top:286px;width:273px;height:412px;box-sizing:border-box;background:#fff;border:1px solid #c6c6c6;box-shadow:0 3px 7px rgba(0,0,0,0.28), 0 0 3px rgba(0,0,0,0.15);"></div>
<div style="position:absolute;left:117px;top:290px;width:20px;height:20px;box-sizing:border-box;background:#c8c8c8;border:1px solid #9b9b9b;"></div>
<svg style="position:absolute;left:118px;top:291px;" width="18" height="18" viewBox="0 0 18 18"><path d="M1.3 8 L3.8 1.9 H5.2 L7.7 8 M2.5 6 H6.5" fill="none" stroke="#2b88d8" stroke-width="1.6" stroke-linejoin="bevel"/><path d="M1.4 10.6 H7.4 L1.4 16.4 H7.8" fill="none" stroke="#333" stroke-width="1.4"/><path d="M13.5 1 V16.5 M10.2 13.2 L13.5 16.5 L16.8 13.2" fill="none" stroke="#333" stroke-width="1.1"/></svg>
<svg style="position:absolute;left:118px;top:319px;" width="18" height="18" viewBox="0 0 18 18"><path d="M1.4 1.6 H7.4 L1.4 7.4 H7.8" fill="none" stroke="#333" stroke-width="1.4"/><path d="M1.3 16.8 L3.8 10.6 H5.2 L7.7 16.8 M2.5 14.8 H6.5" fill="none" stroke="#2b88d8" stroke-width="1.6" stroke-linejoin="bevel"/><path d="M13.5 1 V16.5 M10.2 13.2 L13.5 16.5 L16.8 13.2" fill="none" stroke="#333" stroke-width="1.1"/></svg>
<div style="position:absolute;top:295px;font-size:12px;line-height:12px;color:#000;white-space:nowrap;left:144px;transform-origin:0 0;-webkit-text-stroke:0.1px #000;"><u>S</u>ort A to Z</div>
<div style="position:absolute;top:323px;font-size:12px;line-height:12px;color:#000;white-space:nowrap;left:144px;transform-origin:0 0;-webkit-text-stroke:0.1px #000;transform:scaleX(0.984);">S<u>o</u>rt Z to A</div>
<div style="position:absolute;top:348.5px;font-size:12px;line-height:12px;color:#000;white-space:nowrap;left:136.5px;transform-origin:0 0;-webkit-text-stroke:0.1px #000;transform:scaleX(0.975);">Sor<u>t</u> by Color</div>
<svg style="position:absolute;left:364.5px;top:350px;" width="6" height="10" viewBox="0 0 6 10"><path d="M0.5 0.5 L5 5 L0.5 9.5" fill="none" stroke="#333" stroke-width="1.1"/></svg>
<div style="position:absolute;left:139px;top:368px;width:233px;height:1px;background:#d4d4d4;"></div>
<svg style="position:absolute;left:119px;top:375px;" width="17" height="17" viewBox="0 0 17 17"><path d="M1 1 H15 V3.5 L10 7.5 L6.5 9 L1 3.5 Z" fill="#efefef"/><path d="M0.75 0.75 H15.25 V3.5 L11.5 6.8 M0.75 0.75 V3.5 L6.5 8.5 V16" fill="none" stroke="#8c8c8c" stroke-width="1.5"/><path d="M10 9.5 L15.5 15.5 M15.5 9.5 L10 15.5" stroke="#a0a0a0" stroke-width="1"/></svg>
<div style="position:absolute;top:378px;font-size:12px;line-height:12px;color:#a6a6a6;white-space:nowrap;left:144.2px;transform-origin:0 0;-webkit-text-stroke:0.1px #a6a6a6;transform:scaleX(0.985);"><u>C</u>lear Filter From &quot;School District Name&quot;</div>
<div style="position:absolute;top:404.3px;font-size:12px;line-height:12px;color:#a6a6a6;white-space:nowrap;left:136.3px;transform-origin:0 0;-webkit-text-stroke:0.1px #a6a6a6;transform:scaleX(0.984);">F<u>i</u>lter by Color</div>
<svg style="position:absolute;left:364.5px;top:405px;" width="6" height="10" viewBox="0 0 6 10"><path d="M0.5 0.5 L5 5 L0.5 9.5" fill="none" stroke="#a6a6a6" stroke-width="1.1"/></svg>
<div style="position:absolute;top:428.3px;font-size:12px;line-height:12px;color:#000;white-space:nowrap;left:136.3px;transform-origin:0 0;-webkit-text-stroke:0.1px #000;transform:scaleX(0.951);">Text <u>F</u>ilters</div>
<svg style="position:absolute;left:364.5px;top:429px;" width="6" height="10" viewBox="0 0 6 10"><path d="M0.5 0.5 L5 5 L0.5 9.5" fill="none" stroke="#333" stroke-width="1.1"/></svg>
<div style="position:absolute;left:139px;top:448px;width:233px;height:1px;background:#d4d4d4;"></div>
<div style="position:absolute;left:137px;top:454px;width:235px;height:20px;box-sizing:border-box;background:#fff;border:1px solid #a0a0a0;"></div>
<div style="position:absolute;top:457.3px;font-size:12px;line-height:12px;color:#555;white-space:nowrap;left:139.5px;transform-origin:0 0;-webkit-text-stroke:0.1px #555;transform:scaleX(0.907);">Search</div>
<svg style="position:absolute;left:355px;top:455px;" width="17" height="17" viewBox="0 0 17 17"><circle cx="10.5" cy="6.5" r="5" fill="none" stroke="#333" stroke-width="1.1"/><path d="M7 10 L1 16" stroke="#333" stroke-width="1.3"/></svg>
<div style="position:absolute;left:137px;top:477px;width:235px;height:169px;box-sizing:border-box;background:#fff;border:1px solid #dcdcdc;"></div>
<svg style="position:absolute;left:150px;top:487px;" width="10" height="140" viewBox="0 0 10 140"><path d="M0.5 0 V140" stroke="#8a8a8a" stroke-dasharray="1 1"/><path d="M1 0.5 H10" stroke="#8a8a8a" stroke-dasharray="1 1"/><path d="M1 18.5 H10" stroke="#8a8a8a" stroke-dasharray="1 1"/><path d="M1 36.5 H10" stroke="#8a8a8a" stroke-dasharray="1 1"/><path d="M1 54.5 H10" stroke="#8a8a8a" stroke-dasharray="1 1"/><path d="M1 72.5 H10" stroke="#8a8a8a" stroke-dasharray="1 1"/><path d="M1 90.5 H10" stroke="#8a8a8a" stroke-dasharray="1 1"/><path d="M1 108.5 H10" stroke="#8a8a8a" stroke-dasharray="1 1"/><path d="M1 126.5 H10" stroke="#8a8a8a" stroke-dasharray="1 1"/></svg>
<div style="position:absolute;left:160px;top:481px;width:11px;height:11px;box-sizing:border-box;background:#fff;border:1px solid #555;"></div>
<svg style="position:absolute;left:161px;top:482px;" width="9" height="9" viewBox="0 0 9 9"><path d="M1.5 4.5 L3.8 7 L8 1.5" fill="none" stroke="#000" stroke-width="2"/></svg>
<div style="position:absolute;top:481px;font-size:12px;line-height:12px;color:#000;white-space:nowrap;left:174.6px;transform-origin:0 0;-webkit-text-stroke:0.1px #000;transform:scaleX(0.955);">(Select All)</div>
<div style="position:absolute;left:160px;top:499px;width:11px;height:11px;box-sizing:border-box;background:#fff;border:1px solid #555;"></div>
<svg style="position:absolute;left:161px;top:500px;" width="9" height="9" viewBox="0 0 9 9"><path d="M1.5 4.5 L3.8 7 L8 1.5" fill="none" stroke="#000" stroke-width="2"/></svg>
<div style="position:absolute;top:499px;font-size:12px;line-height:12px;color:#000;white-space:nowrap;left:174.6px;transform-origin:0 0;-webkit-text-stroke:0.1px #000;transform:scaleX(0.904);">A.C.G.C</div>
<div style="position:absolute;left:160px;top:517px;width:11px;height:11px;box-sizing:border-box;background:#fff;border:1px solid #555;"></div>
<svg style="position:absolute;left:161px;top:518px;" width="9" height="9" viewBox="0 0 9 9"><path d="M1.5 4.5 L3.8 7 L8 1.5" fill="none" stroke="#000" stroke-width="2"/></svg>
<div style="position:absolute;top:517px;font-size:12px;line-height:12px;color:#000;white-space:nowrap;left:174.6px;transform-origin:0 0;-webkit-text-stroke:0.1px #000;transform:scaleX(0.986);">Ada-Borup</div>
<div style="position:absolute;left:160px;top:535px;width:11px;height:11px;box-sizing:border-box;background:#fff;border:1px solid #555;"></div>
<svg style="position:absolute;left:161px;top:536px;" width="9" height="9" viewBox="0 0 9 9"><path d="M1.5 4.5 L3.8 7 L8 1.5" fill="none" stroke="#000" stroke-width="2"/></svg>
<div style="position:absolute;top:535px;font-size:12px;line-height:12px;color:#000;white-space:nowrap;left:174.6px;transform-origin:0 0;-webkit-text-stroke:0.1px #000;transform:scaleX(0.969);">Adrian</div>
<div style="position:absolute;left:160px;top:553px;width:11px;height:11px;box-sizing:border-box;background:#fff;border:1px solid #555;"></div>
<svg style="position:absolute;left:161px;top:554px;" width="9" height="9" viewBox="0 0 9 9"><path d="M1.5 4.5 L3.8 7 L8 1.5" fill="none" stroke="#000" stroke-width="2"/></svg>
<div style="position:absolute;top:553px;font-size:12px;line-height:12px;color:#000;white-space:nowrap;left:174.6px;transform-origin:0 0;-webkit-text-stroke:0.1px #000;transform:scaleX(1.077);">Aitkin</div>
<div style="position:absolute;left:160px;top:571px;width:11px;height:11px;box-sizing:border-box;background:#fff;border:1px solid #555;"></div>
<svg style="position:absolute;left:161px;top:572px;" width="9" height="9" viewBox="0 0 9 9"><path d="M1.5 4.5 L3.8 7 L8 1.5" fill="none" stroke="#000" stroke-width="2"/></svg>
<div style="position:absolute;top:571px;font-size:12px;line-height:12px;color:#000;white-space:nowrap;left:174.6px;transform-origin:0 0;-webkit-text-stroke:0.1px #000;transform:scaleX(1.019);">Albany</div>
<div style="position:absolute;left:160px;top:589px;width:11px;height:11px;box-sizing:border-box;background:#fff;border:1px solid #555;"></div>
<svg style="position:absolute;left:161px;top:590px;" width="9" height="9" viewBox="0 0 9 9"><path d="M1.5 4.5 L3.8 7 L8 1.5" fill="none" stroke="#000" stroke-width="2"/></svg>
<div style="position:absolute;top:589px;font-size:12px;line-height:12px;color:#000;white-space:nowrap;left:174.6px;transform-origin:0 0;-webkit-text-stroke:0.1px #000;transform:scaleX(0.973);">Albert Lea</div>
<div style="position:absolute;left:160px;top:607px;width:11px;height:11px;box-sizing:border-box;background:#fff;border:1px solid #555;"></div>
<svg style="position:absolute;left:161px;top:608px;" width="9" height="9" viewBox="0 0 9 9"><path d="M1.5 4.5 L3.8 7 L8 1.5" fill="none" stroke="#000" stroke-width="2"/></svg>
<div style="position:absolute;top:607px;font-size:12px;line-height:12px;color:#000;white-space:nowrap;left:174.6px;transform-origin:0 0;-webkit-text-stroke:0.1px #000;transform:scaleX(1.010);">Alden-Conger</div>
<div style="position:absolute;left:138px;top:625px;width:216px;height:2px;overflow:hidden"><div style="position:absolute;left:22px;top:0;width:11px;height:11px;box-sizing:border-box;border:1px solid #555"></div><div style="position:absolute;left:36.6px;top:0px;font-size:12px;line-height:12px;color:#000;white-space:nowrap;transform:scaleX(0.95);transform-origin:0 0">Alexandria</div></div>
<div style="position:absolute;left:354px;top:478px;width:17px;height:149px;background:#f0f0f0;"></div>
<svg style="position:absolute;left:358px;top:484px;" width="8" height="6" viewBox="0 0 8 6"><path d="M0.8 5 L4 1.5 L7.2 5" fill="none" stroke="#606060" stroke-width="1.5"/></svg>
<div style="position:absolute;left:354px;top:495px;width:15px;height:17px;background:#cdcdcd;"></div>
<svg style="position:absolute;left:358px;top:615px;" width="8" height="6" viewBox="0 0 8 6"><path d="M0.8 1 L4 4.5 L7.2 1" fill="none" stroke="#606060" stroke-width="1.5"/></svg>
<div style="position:absolute;left:138px;top:627px;width:233px;height:17px;background:#f0f0f0;"></div>
<div style="position:absolute;left:155px;top:628px;width:175px;height:15px;background:#cdcdcd;"></div>
<svg style="position:absolute;left:143px;top:631px;" width="6" height="9" viewBox="0 0 6 9"><path d="M5 0.8 L1.5 4.5 L5 8.2" fill="none" stroke="#606060" stroke-width="1.5"/></svg>
<svg style="position:absolute;left:342px;top:631px;" width="6" height="9" viewBox="0 0 6 9"><path d="M1 0.8 L4.5 4.5 L1 8.2" fill="none" stroke="#606060" stroke-width="1.5"/></svg>
<div style="position:absolute;left:214px;top:661px;width:73px;height:21px;box-sizing:border-box;background:#e1e1e1;border:1px solid #adadad;"></div>
<div style="position:absolute;left:298px;top:661px;width:73px;height:21px;box-sizing:border-box;background:#e1e1e1;border:1px solid #adadad;"></div>
<div style="position:absolute;top:666px;font-size:12px;line-height:12px;color:#000;white-space:nowrap;left:243.35px;transform-origin:0 0;-webkit-text-stroke:0.1px #000;transform:scaleX(0.825);">OK</div>
<div style="position:absolute;top:666px;font-size:12px;line-height:12px;color:#000;white-space:nowrap;left:317.3px;transform-origin:0 0;-webkit-text-stroke:0.1px #000;transform:scaleX(0.894);">Cancel</div>
<div style="position:absolute;left:107px;top:687px;width:271px;height:1px;background:#dbe5f1;"></div>
<div style="position:absolute;left:107px;top:688px;width:271px;height:9px;background:linear-gradient(#fff,#e9ebee);"></div>
<div style="position:absolute;left:373px;top:691px;width:2px;height:2px;background:#9a9a9a;"></div>
<div style="position:absolute;left:369px;top:695px;width:2px;height:2px;background:#9a9a9a;"></div>
<div style="position:absolute;left:373px;top:695px;width:2px;height:2px;background:#9a9a9a;"></div>
<svg style="position:absolute;left:349px;top:261px;" width="44" height="33" viewBox="0 0 44 33"><ellipse cx="21.8" cy="16.4" rx="19.4" ry="14.1" fill="none" stroke="#e8141b" stroke-width="2.9"/></svg>
</body></html>
